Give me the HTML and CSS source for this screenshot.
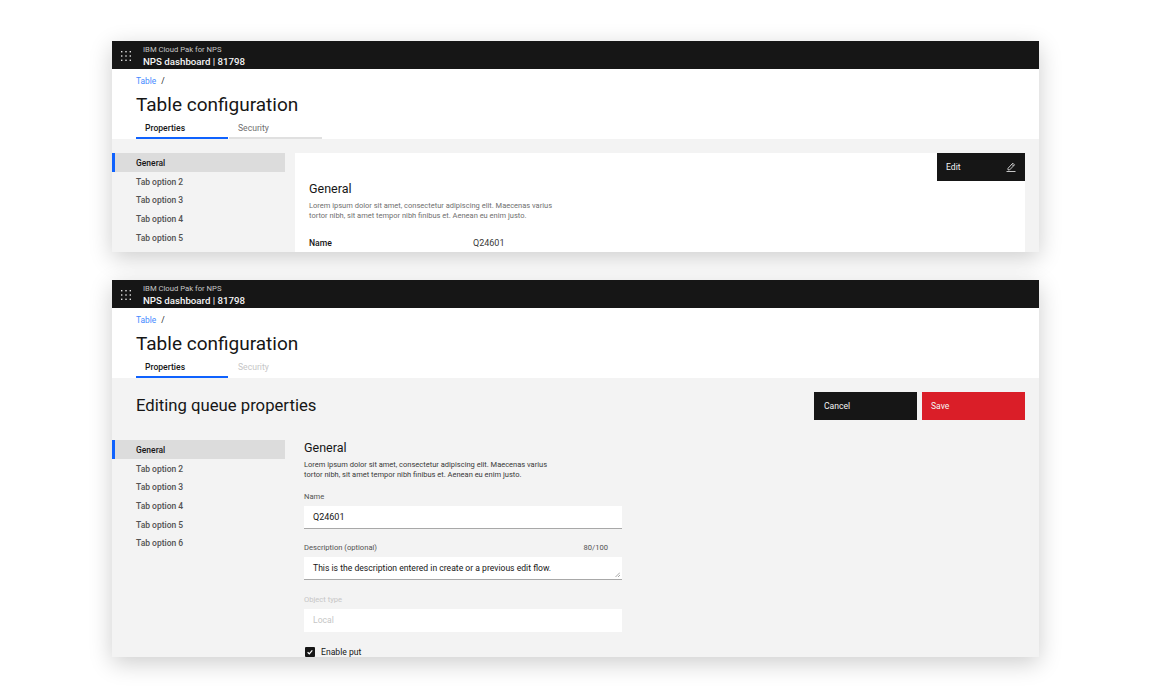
FILE: index.html
```html
<!DOCTYPE html>
<html lang="en">
<head>
<meta charset="utf-8">
<title>Table configuration</title>
<link rel="stylesheet" href="styles.css">
</head>
<body>
<section class="screen screen-view">
  <header class="topbar">
    <svg class="switcher" width="10" height="10" viewBox="0 0 10 10"><g fill="#e0e0e0"><rect x="0" y="0" width="1.4" height="1.4"/><rect x="4.3" y="0" width="1.4" height="1.4"/><rect x="8.6" y="0" width="1.4" height="1.4"/><rect x="0" y="4.3" width="1.4" height="1.4"/><rect x="4.3" y="4.3" width="1.4" height="1.4"/><rect x="8.6" y="4.3" width="1.4" height="1.4"/><rect x="0" y="8.6" width="1.4" height="1.4"/><rect x="4.3" y="8.6" width="1.4" height="1.4"/><rect x="8.6" y="8.6" width="1.4" height="1.4"/></g></svg>
    <div class="brand"><div class="brand-top">IBM Cloud Pak for NPS</div><div class="brand-name">NPS dashboard | 81798</div></div>
  </header>
  <div class="pagehead">
    <div class="crumbs"><a class="crumb-link">Table</a><span class="crumb-sep">/</span></div>
    <h1 class="title">Table configuration</h1>
    <div class="tabs"><div class="tab tab-active">Properties</div><div class="tab tab-idle">Security</div></div>
  </div>
  <div class="body body-view">
    <nav class="sidenav">
      <div class="navitem navitem-active">General</div>
      <div class="navitem">Tab option 2</div>
      <div class="navitem">Tab option 3</div>
      <div class="navitem">Tab option 4</div>
      <div class="navitem">Tab option 5</div>
    </nav>
    <div class="panel">
      <div class="editrow"><button class="btn btn-edit"><span>Edit</span><svg width="10" height="10" viewBox="0 0 10 10" fill="none" stroke="#f4f4f4" stroke-width="0.8"><path d="M0.5 9.5h9"/><path d="M2 7.9V6.3L6.8 1.2l1.7 1.7L3.6 7.9z"/><path d="M5.8 2.3l1.7 1.7"/></svg></button></div>
      <h2 class="section-title panel-title">General</h2>
      <p class="section-text section-text-muted">Lorem ipsum dolor sit amet, consectetur adipiscing elit. Maecenas varius<br>tortor nibh, sit amet tempor nibh finibus et. Aenean eu enim justo.</p>
      <div class="kv"><span class="kv-key">Name</span><span class="kv-val">Q24601</span></div>
    </div>
  </div>
</section>

<section class="screen screen-edit">
  <header class="topbar">
    <svg class="switcher" width="10" height="10" viewBox="0 0 10 10"><g fill="#e0e0e0"><rect x="0" y="0" width="1.4" height="1.4"/><rect x="4.3" y="0" width="1.4" height="1.4"/><rect x="8.6" y="0" width="1.4" height="1.4"/><rect x="0" y="4.3" width="1.4" height="1.4"/><rect x="4.3" y="4.3" width="1.4" height="1.4"/><rect x="8.6" y="4.3" width="1.4" height="1.4"/><rect x="0" y="8.6" width="1.4" height="1.4"/><rect x="4.3" y="8.6" width="1.4" height="1.4"/><rect x="8.6" y="8.6" width="1.4" height="1.4"/></g></svg>
    <div class="brand"><div class="brand-top">IBM Cloud Pak for NPS</div><div class="brand-name">NPS dashboard | 81798</div></div>
  </header>
  <div class="pagehead">
    <div class="crumbs"><a class="crumb-link">Table</a><span class="crumb-sep">/</span></div>
    <h1 class="title">Table configuration</h1>
    <div class="tabs"><div class="tab tab-active">Properties</div><div class="tab tab-disabled">Security</div></div>
  </div>
  <div class="body body-edit">
    <div class="edit-head">
      <h2 class="edit-title">Editing queue properties</h2>
      <div class="actions"><button class="btn btn-cancel">Cancel</button><button class="btn btn-save">Save</button></div>
    </div>
    <div class="edit-main">
      <nav class="sidenav">
        <div class="navitem navitem-active">General</div>
        <div class="navitem">Tab option 2</div>
        <div class="navitem">Tab option 3</div>
        <div class="navitem">Tab option 4</div>
        <div class="navitem">Tab option 5</div>
        <div class="navitem">Tab option 6</div>
      </nav>
      <form class="form">
        <h2 class="section-title form-title">General</h2>
        <p class="section-text">Lorem ipsum dolor sit amet, consectetur adipiscing elit. Maecenas varius<br>tortor nibh, sit amet tempor nibh finibus et. Aenean eu enim justo.</p>
        <div class="field field-name">
          <div class="label">Name</div>
          <div class="input input-code">Q24601</div>
        </div>
        <div class="field">
          <div class="label label-split"><span>Description (optional)</span><span class="counter">80/100</span></div>
          <div class="input input-area">This is the description entered in create or a previous edit flow.<svg class="grip" width="5" height="5" viewBox="0 0 5 5" stroke="#6f6f6f" stroke-width="0.6"><path d="M0.5 5L5 0.5M3 5L5 3"/></svg></div>
        </div>
        <div class="field">
          <div class="label label-disabled">Object type</div>
          <div class="input input-disabled">Local</div>
        </div>
        <label class="check"><span class="box"><svg width="10" height="10" viewBox="0 0 10 10" fill="none" stroke="#fff" stroke-width="1.2"><path d="M2.6 5.2l1.7 1.6 3-3.4"/></svg></span>Enable put</label>
      </form>
    </div>
  </div>
</section>
</body>
</html>
```

FILE: styles.css
```css
* { box-sizing: border-box; }
html, body { margin: 0; height: 100%; background: #fff; }
body {
  padding: 41px 0 0 112px;
  font-family: Roboto, "Noto Sans", sans-serif;
  color: #161616;
  overflow: hidden;
}
h1, h2, p { margin: 0; font-weight: 400; }
.screen {
  width: 927px;
  display: flex;
  flex-direction: column;
  background: #f3f3f3;
  overflow: hidden;
  box-shadow: 0 6px 22px rgba(0, 0, 0, 0.2);
}
.screen-view { height: 211px; margin-bottom: 28px; }
.screen-edit { height: 377px; }

.topbar {
  height: 28px;
  flex: none;
  background: #161616;
  color: #f4f4f4;
  display: flex;
  align-items: center;
  padding-left: 9px;
}
.switcher { margin-right: 12px; margin-top: 1px; }
.brand { padding-top: 1px; }
.brand-top { font-size: 7.7px; line-height: 11px; color: #c6c6c6; }
.brand-name { font-size: 9.7px; line-height: 13px; font-weight: 500; }

.pagehead {
  background: #fff;
  padding: 6px 0 0 24px;
  height: 70px;
  flex: none;
}
.crumbs { display: flex; gap: 5px; font-size: 8.4px; line-height: 12px; }
.crumb-link { color: #4589ff; }
.title { font-size: 19px; line-height: 24px; margin-top: 6px; font-weight: 400; color: #161616; }
.tabs { display: flex; margin-top: 2px; gap: 1px; }
.tab { width: 92px; height: 20px; font-size: 8.6px; line-height: 19px; padding-left: 9px; border-bottom: 2px solid #e0e0e0; }
.tab-idle { width: 93px; color: #6f6f6f; }
.tab-active { font-weight: 500; border-bottom-color: #0f62fe; }
.tab-disabled { color: #c6c6c6; border-bottom-color: transparent; }

.body { flex: 1; min-height: 0; }
.body-view { display: flex; padding-top: 14px; }
.sidenav { width: 173px; flex: none; }
.navitem {
  height: 18.67px;
  font-size: 8.5px;
  line-height: 20px;
  font-weight: 500;
  padding-left: 24px;
  color: #525252;
}
.navitem-active {
  background: #dcdcdc;
  color: #161616;
  box-shadow: inset 3px 0 0 #0f62fe;
}
.panel {
  margin-left: 10px;
  width: 730px;
  background: #fff;
  padding-left: 14px;
}
.editrow { display: flex; justify-content: flex-end; height: 28px; }
.btn {
  width: 103px;
  height: 28px;
  border: 0;
  font: inherit;
  font-size: 8.6px;
  text-align: left;
  padding: 0 9px;
  color: #f4f4f4;
}
.btn-edit { width: 88px; background: #161616; display: flex; align-items: center; justify-content: space-between; }
.btn-cancel { background: #161616; padding-left: 10px; }
.btn-save { background: #da1e28; }
.section-title { font-size: 12.5px; line-height: 16px; color: #161616; }
.panel-title { margin-top: 0; }
.section-text { font-size: 7.5px; line-height: 9.5px; margin-top: 4px; color: #393939; }
.section-text-muted { color: #6f6f6f; }
.kv { display: flex; font-size: 8.6px; line-height: 12px; margin-top: 17px; }
.kv-key { width: 164px; font-weight: 500; }
.kv-val { color: #393939; font-size: 9px; }

.edit-head {
  display: flex;
  justify-content: space-between;
  align-items: center;
  padding: 14px 14px 0 24px;
}
.edit-title { font-size: 16.7px; line-height: 28px; color: #161616; }
.actions { display: flex; gap: 5px; }
.edit-main { display: flex; margin-top: 20px; }
.form { margin-left: 19px; width: 318px; }
.field { margin-top: 15px; }
.field-name { margin-top: 13px; }
.field-name + .field { margin-top: 14px; }
.label { font-size: 7.6px; line-height: 10px; color: #525252; margin-bottom: 4px; }
.label-split { display: flex; justify-content: space-between; padding-right: 14px; }
.label-disabled { color: #c6c6c6; }
.input {
  height: 23px;
  background: #fff;
  border-bottom: 1px solid #a8a8a8;
  font-size: 8.6px;
  line-height: 23px;
  padding-left: 9px;
  color: #161616;
  position: relative;
}
.input-code { font-size: 9px; }
.input-disabled { border-bottom-color: transparent; color: #c6c6c6; }
.grip { position: absolute; right: 2px; bottom: 2px; }
.check { display: flex; align-items: center; font-size: 8.6px; line-height: 12px; margin-top: 14px; color: #161616; gap: 6px; padding-left: 1px; }
.box { width: 10px; height: 10px; background: #161616; border-radius: 1px; display: block; }
.box svg { display: block; }
```
